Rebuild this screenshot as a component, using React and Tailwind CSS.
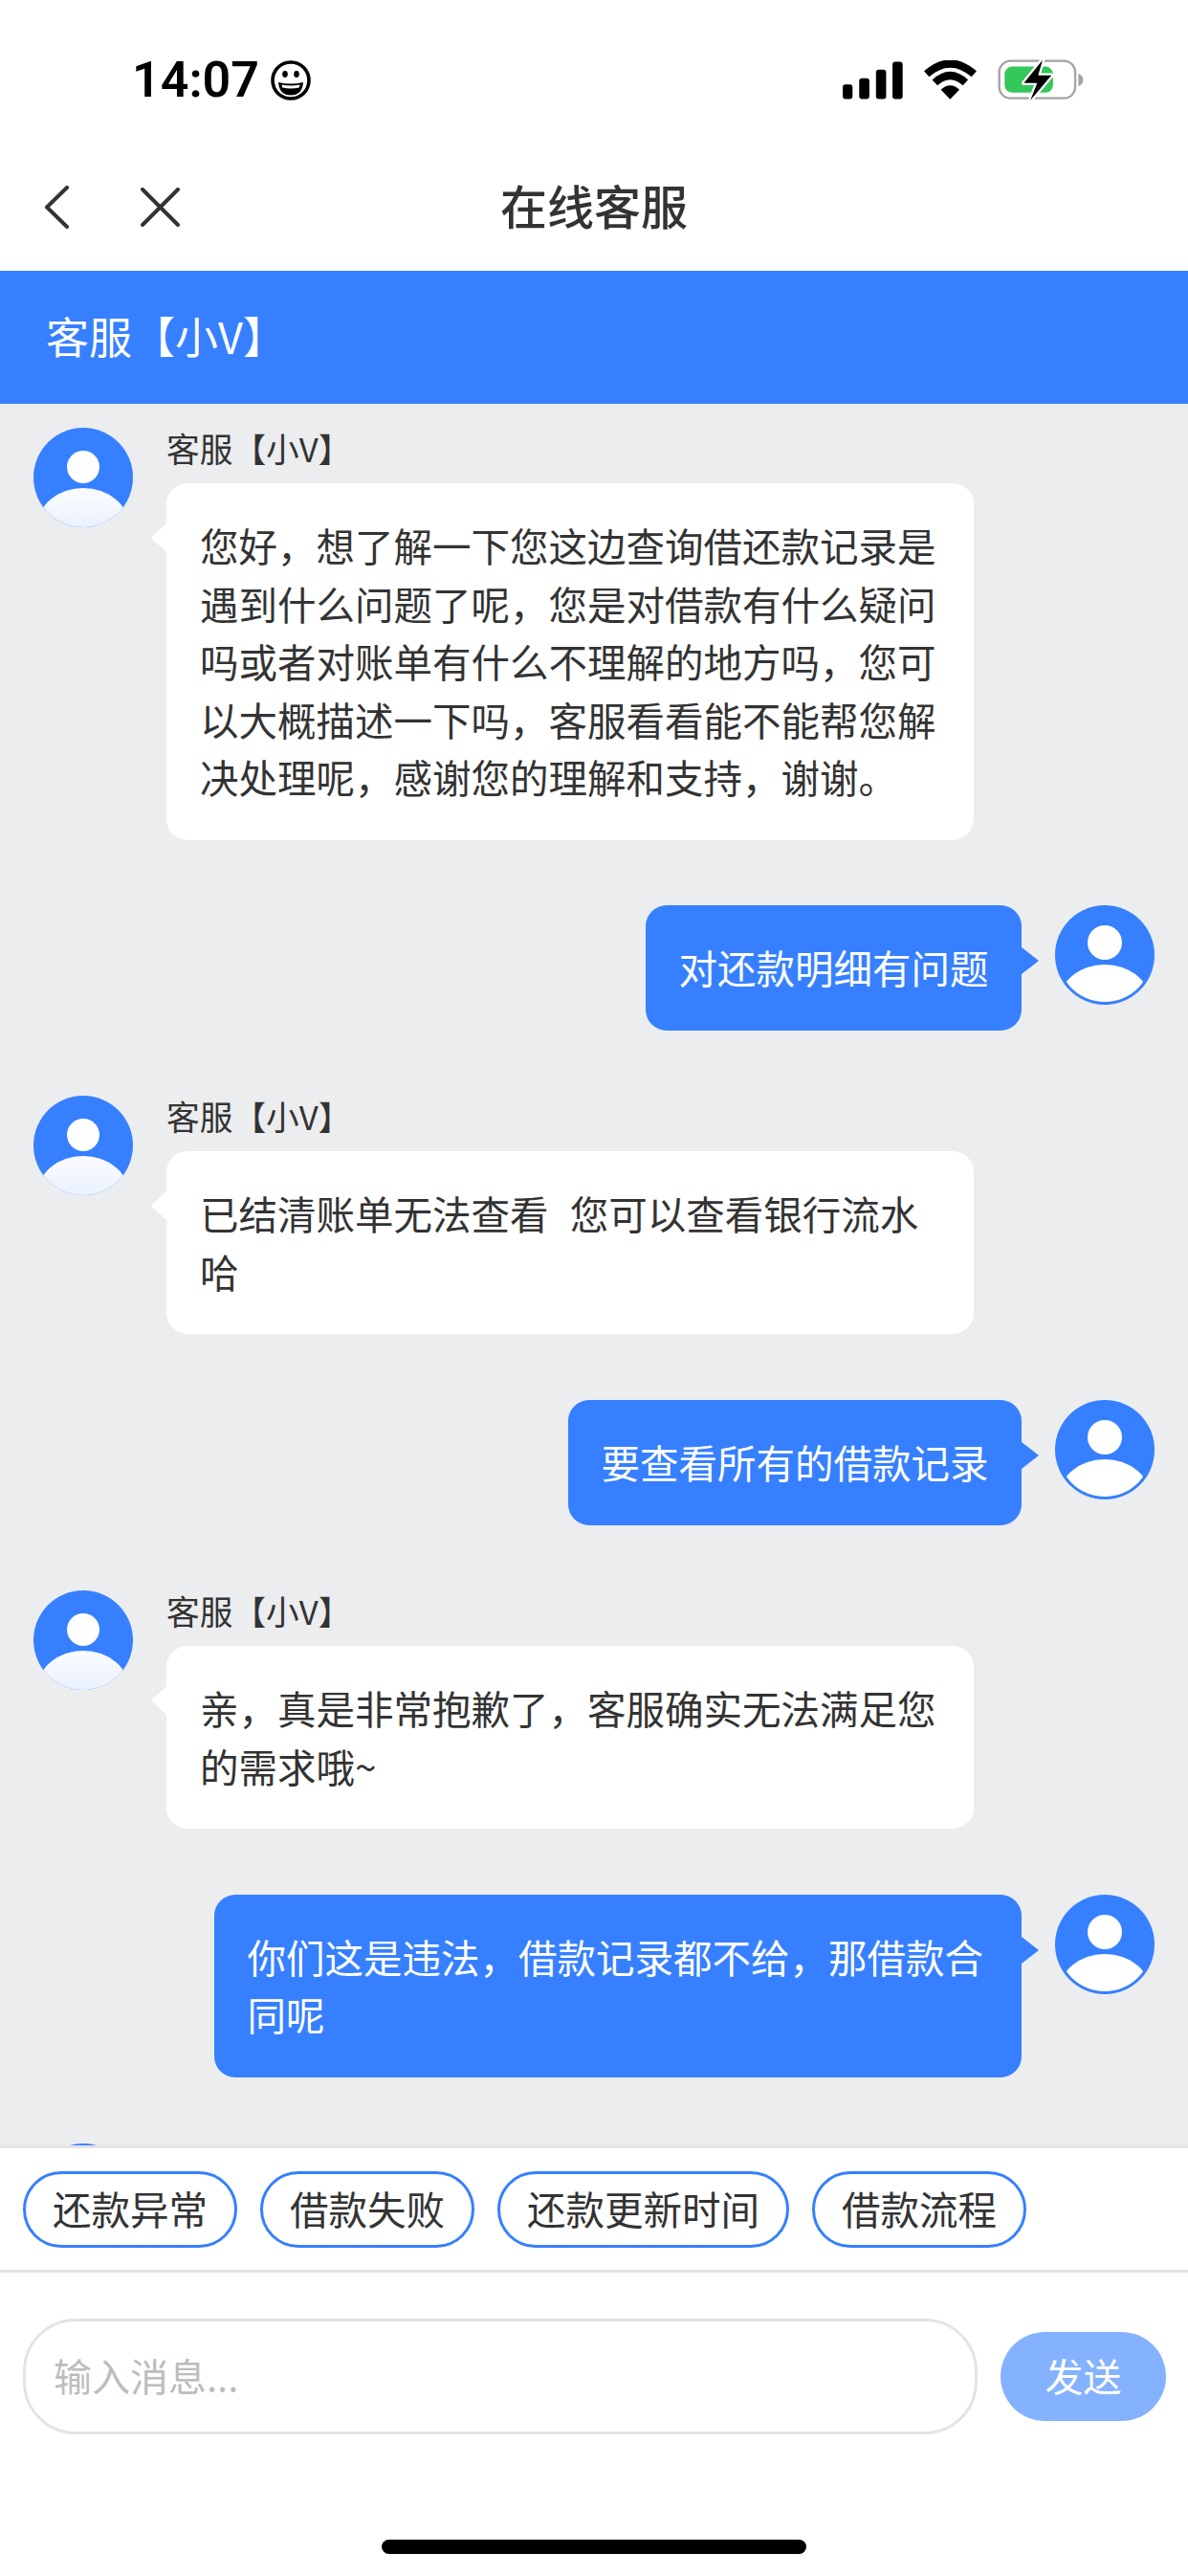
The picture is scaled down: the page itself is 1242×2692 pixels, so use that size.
const chips = ["还款异常", "借款失败", "还款更新时间", "借款流程"];

const messages = [
  {
    from: "agent",
    text: "您好，想了解一下您这边查询借还款记录是遇到什么问题了呢，您是对借款有什么疑问吗或者对账单有什么不理解的地方吗，您可以大概描述一下吗，客服看看能不能帮您解决处理呢，感谢您的理解和支持，谢谢。",
  },
  { from: "me", text: "对还款明细有问题" },
  { from: "agent", text: "已结清账单无法查看  您可以查看银行流水哈" },
  { from: "me", text: "要查看所有的借款记录" },
  { from: "agent", text: "亲，真是非常抱歉了，客服确实无法满足您的需求哦~" },
  { from: "me", text: "你们这是违法，借款记录都不给，那借款合同呢" },
];

const Smiley = () => (
  <svg width="42" height="42" viewBox="0 0 42 42" className="ml-[12px]">
    <circle cx="21" cy="21" r="19" fill="white" stroke="black" strokeWidth="3.6" />
    <ellipse cx="15" cy="14.5" rx="2.8" ry="3.4" fill="black" />
    <ellipse cx="27" cy="14.5" rx="2.8" ry="3.4" fill="black" />
    <path d="M8 23 Q21 26 34 23 Q33 36.5 21 36.5 Q9 36.5 8 23 Z" fill="black" />
    <path d="M11.5 25.5 Q21 27.5 30.5 25.5 L29.8 28.5 Q21 30.5 12.2 28.5 Z" fill="white" />
  </svg>
);

const StatusBar = () => (
  <div className="flex h-[150px] items-start justify-between pt-[62px] pl-[138px] pr-[109px]">
    <div className="flex h-[44px] items-center">
      <span className="font-['Roboto',sans-serif] text-[52px] leading-[44px] font-semibold text-black">14:07</span>
      <Smiley />
    </div>
    <div className="flex items-center">
      <svg width="63" height="40" viewBox="305 100 190 118">
        <rect x="305" y="172" width="31" height="46" rx="9" />
        <rect x="357" y="152" width="32" height="66" rx="9" />
        <rect x="410" y="125" width="32" height="93" rx="9" />
        <rect x="462" y="100" width="32" height="118" rx="9" />
      </svg>
      <svg width="55" height="41" viewBox="560 97 165 121" className="ml-[22px]">
        <path d="M642 218 L613 188 Q642 162 671 188 Z" />
        <path d="M594 166 Q642 122 690 166" fill="none" stroke="black" strokeWidth="24" />
        <path d="M568 139 Q642 74 717 139" fill="none" stroke="black" strokeWidth="24" />
      </svg>
      <svg width="90" height="43" viewBox="790 95 272 130" className="ml-[22px]">
        <rect x="795" y="100" width="240" height="118" rx="36" fill="none" stroke="#a3a3a3" strokeWidth="7" />
        <path d="M1045 140 Q1060 145 1060 160 Q1060 175 1045 180 Z" fill="#a3a3a3" />
        <rect x="812" y="118" width="153" height="82" rx="24" fill="#34c759" />
        <path
          d="M932 97 L873 170 L915 170 L893 225 L960 146 L918 146 Z"
          fill="black"
          stroke="white"
          strokeWidth="14"
          strokeLinejoin="round"
          paintOrder="stroke"
        />
      </svg>
    </div>
  </div>
);

const NavBar = () => (
  <div className="grid h-[133px] grid-cols-[1fr_auto_1fr] items-center">
    <div className="flex items-center gap-[75px] pl-[47px]">
      <svg width="25" height="45" viewBox="0 0 25 45" fill="none" stroke="#333333" strokeWidth="4" strokeLinecap="round" strokeLinejoin="round">
        <path d="M23 2 L2 22.5 L23 43" />
      </svg>
      <svg width="41" height="41" viewBox="0 0 41 41" fill="none" stroke="#333333" strokeWidth="4" strokeLinecap="round">
        <path d="M2 2 L39 39 M39 2 L2 39" />
      </svg>
    </div>
    <h1 className="pb-[5px] text-[49px] leading-[60px] font-medium text-[#333333]">在线客服</h1>
    <div />
  </div>
);

const AgentAvatar = () => (
  <svg width="104" height="104" viewBox="0 0 104 104" className="shrink-0">
    <defs>
      <clipPath id="agent-clip">
        <circle cx="52" cy="52" r="52" />
      </clipPath>
      <linearGradient id="agent-fade" x1="0" y1="0" x2="0" y2="1">
        <stop offset="0" stopColor="#fbfcff" />
        <stop offset="0.55" stopColor="#e9f1fe" />
        <stop offset="1" stopColor="#e9f1fe" />
      </linearGradient>
    </defs>
    <circle cx="52" cy="52" r="52" fill="#3680ff" />
    <circle cx="52" cy="41" r="17" fill="white" />
    <ellipse cx="52" cy="103" rx="48" ry="40" fill="url(#agent-fade)" clipPath="url(#agent-clip)" />
  </svg>
);

const UserAvatar = () => (
  <svg width="104" height="104" viewBox="0 0 104 104" className="shrink-0">
    <defs>
      <clipPath id="user-clip">
        <circle cx="52" cy="52" r="49" />
      </clipPath>
    </defs>
    <circle cx="52" cy="52" r="52" fill="#3680ff" />
    <circle cx="52" cy="39" r="18" fill="white" />
    <ellipse cx="52" cy="102" rx="48" ry="40" fill="white" clipPath="url(#user-clip)" />
  </svg>
);

const AgentMessage = ({ text }) => (
  <div className="flex gap-[35px] pl-[35px]">
    <AgentAvatar />
    <div className="min-w-0">
      <div className="flex h-[44px] items-center pb-[2px] text-[34.7px] leading-[42px] text-[#333333]">客服【小V】</div>
      <div className="relative mt-[14px] w-[844px] rounded-[22px] bg-white px-[35px] py-[35px] text-[40.5px] leading-[60.5px] whitespace-pre-wrap text-[#333333] [word-spacing:2px]">
        <span className="absolute top-[42px] right-full h-0 w-0 border-y-[15px] border-r-[16px] border-y-transparent border-r-white" />
        {text}
      </div>
    </div>
  </div>
);

const MyMessage = ({ text }) => (
  <div className="flex justify-end gap-[35px] pr-[35px]">
    <div className="relative max-w-[844px] rounded-[22px] bg-[#3680ff] px-[34.5px] py-[35px] text-[40.5px] leading-[60.5px] text-white">
      <span className="absolute top-[44px] left-full h-0 w-0 border-y-[14px] border-l-[18px] border-y-transparent border-l-[#3680ff]" />
      {text}
    </div>
    <UserAvatar />
  </div>
);

const App = () => (
  <div className="flex h-[2692px] w-[1242px] flex-col overflow-hidden bg-white font-['Noto_Sans_CJK_SC','Liberation_Sans',sans-serif]">
    <StatusBar />
    <NavBar />

    <div className="flex h-[139px] shrink-0 items-center bg-[#3680ff] pb-[4px] pl-[48px] text-[45px] leading-[56px] text-white">客服【小V】</div>

    <main className="flex min-h-0 flex-1 flex-col gap-[68.7px] overflow-hidden bg-[#ecedef] pt-[25px]">
      {messages.map((m, i) =>
        m.from === "agent" ? <AgentMessage key={i} text={m.text} /> : <MyMessage key={i} text={m.text} />
      )}
      <div className="shrink-0 pl-[35px]">
        <AgentAvatar />
      </div>
    </main>

    <div className="shrink-0 border-t-[3px] border-[#e4e4e6] bg-white">
      <div className="flex gap-[24px] border-b-[3px] border-[#e4e4e6] pt-[24px] pb-[23px] pl-[24px]">
        {chips.map((c) => (
          <button key={c} className="h-[80px] rounded-full border-[3px] border-[#3680ff] px-[28px] pb-[3px] text-[40.5px] leading-[50px] text-[#333333]">
            {c}
          </button>
        ))}
      </div>
      <div className="flex items-center pt-[48px] pl-[24px]">
        <input
          readOnly
          placeholder="输入消息..."
          className="h-[121px] w-[998px] rounded-[55px] border-[3px] border-[#e4e4e4] pr-[29px] pb-[3px] pl-[29px] text-[40px] outline-none placeholder:text-[#bdbdbd]"
        />
        <button className="ml-[24px] h-[93px] w-[173px] rounded-full bg-[#85b2ff] pb-[3px] text-[40px] leading-[50px] text-white">发送</button>
      </div>
      <div className="flex justify-center pt-[110px] pb-[23px]">
        <div className="h-[15px] w-[444px] rounded-full bg-black" />
      </div>
    </div>
  </div>
);

export default App;
